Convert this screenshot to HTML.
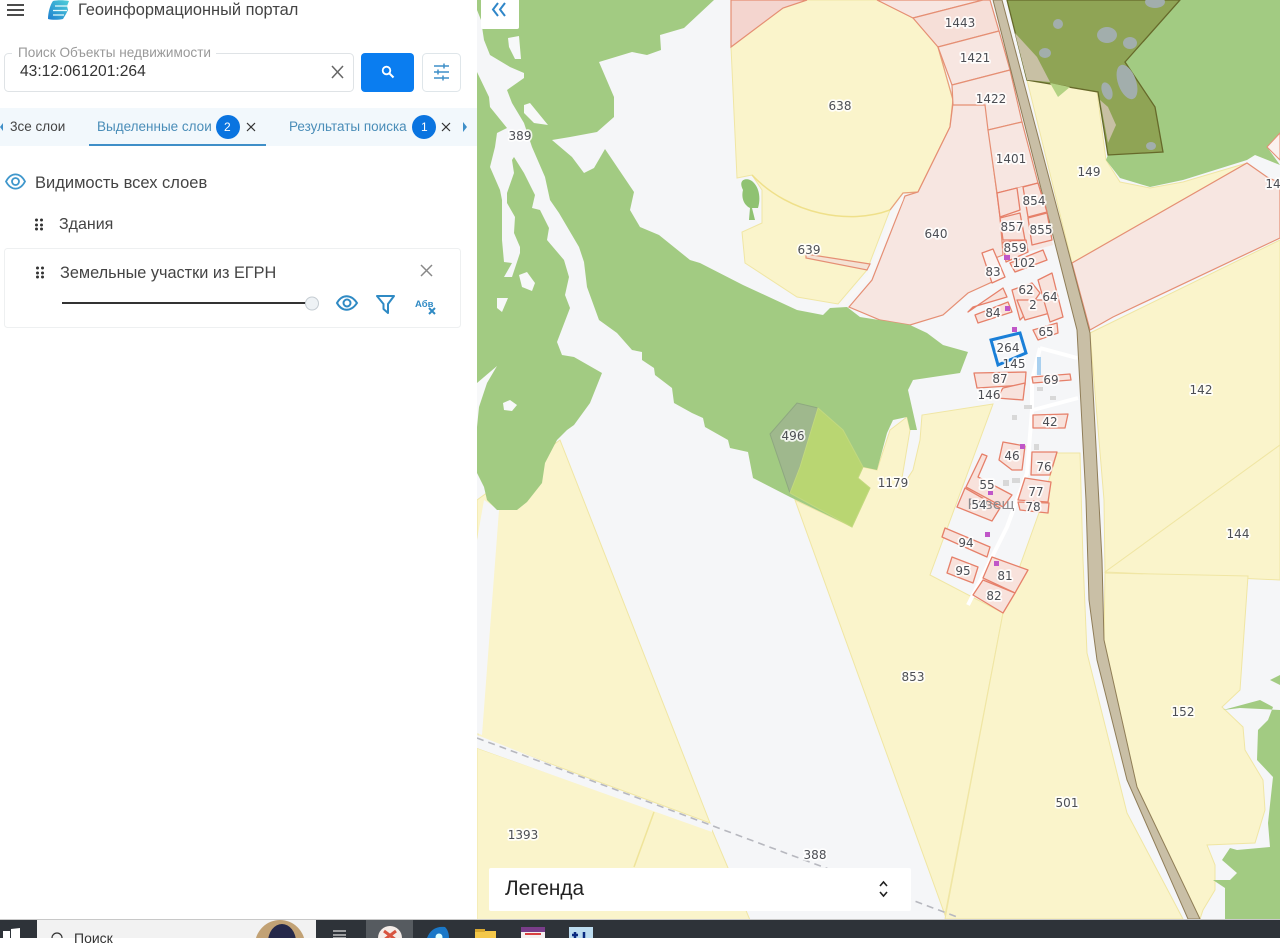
<!DOCTYPE html>
<html lang="ru"><head><meta charset="utf-8"><title>Геоинформационный портал</title>
<style>
html,body{margin:0;padding:0;width:1280px;height:938px;overflow:hidden;background:#fff;font-family:"Liberation Sans","DejaVu Sans",sans-serif}
svg{position:absolute;left:0;top:0}
.t{position:absolute;white-space:nowrap;line-height:1}
#map text{font-family:"DejaVu Sans",sans-serif;font-size:12px;fill:#4c4e54;text-anchor:middle;paint-order:stroke;stroke:#fff;stroke-width:3.5px;stroke-opacity:.85;stroke-linejoin:round}
</style></head><body>
<svg id="map" width="1280" height="938" viewBox="0 0 1280 938">
<defs><linearGradient id="lg" x1="0" y1="1" x2="1" y2="0"><stop offset="0" stop-color="#1f7fd0"/><stop offset="1" stop-color="#4fd0d8"/></linearGradient></defs>
<rect x="477" y="0" width="803" height="920" fill="#f5f6f8"/>
<!-- yellows -->
<g fill="#faf4cb" stroke="#f0e6a4" stroke-width="1">
<polygon points="560,440 710,823 478,737 477,500"/>
<polygon points="477,748 712,830 750,920 477,920"/>
<polygon points="795,500 852,527 870,488 858,478 863,467 877,470 890,430 907,417 910,430 900,490 913,470 920,440 922,415 993,404 930,575 1003,613 945,915"/>
<polygon points="1003,613 1040,510 1057,453 1080,453 1083,560 1087,653 1127,813 1183,919 945,919"/>
<polygon points="1027,80 1097,92 1106,160 1120,182 1150,188 1183,182 1247,163 1072,263"/>
<polygon points="1090,333 1280,240 1280,445 1105,572 1104,500"/>
<polygon points="1105,572 1280,445 1280,580"/>
<polygon points="1105,573 1248,576 1240,690 1222,707 1243,727 1245,750 1263,780 1265,810 1255,843 1207,845 1215,865 1215,890 1203,910 1200,919 1137,787 1104,640"/>
<polygon points="731,47 737,178 752,175 762,190 762,223 742,232 745,263 797,297 838,304 867,270 890,210 903,193 918,192 950,127 953,100 938,47 913,18 877,0 807,0 783,8"/>
</g>
<polygon points="484,500 499,510 482,735 477,733 477,540" fill="#f5f6f8"/>
<path d="M752,175 C790,215 850,225 890,210" fill="none" stroke="#efe08a" stroke-width="1.5"/>
<path d="M890,210L903,193 918,192 950,127 953,100 938,47" fill="none" stroke="#e8a27c" stroke-width="1.300"/>
<line x1="654" y1="812" x2="634" y2="867" stroke="#efe49a" stroke-width="1.5"/>
<!-- pinks -->
<g fill="#f7e6e1" stroke="#e58f74" stroke-width="1.2">
<polygon points="731,0 731,47 783,8 807,0" fill="#f4d5cf"/>
<polygon points="849,307 872,280 905,196 918,192 950,127 953,103 985,103 1000,217 1003,255 985,262 992,282 968,293 943,315 910,325 880,320"/>
<polygon points="877,0 913,18 983,0"/>
<polygon points="913,18 983,0 990,0 999,31 938,47" fill="#f6dfd8"/>
<polygon points="938,47 999,31 1010,70 952,85"/>
<polygon points="952,85 1010,70 1022,122 988,130 985,105 953,105"/>
<polygon points="988,130 1022,122 1038,183 997,193"/>
<polygon points="997,193 1038,183 1053,245 1005,258" stroke="none"/>
<polygon points="1072,263 1247,163 1267,177 1280,183 1280,238 1113,317 1090,330"/>
<polygon points="806,254 870,264 867,270 806,258" fill="#f4e2d4"/>
</g>
<path d="M902,198L869,276 842,305" fill="none" stroke="#f9f7f5" stroke-width="3.500"/>
<!-- greens -->
<g fill="#a2cb82">
<polygon points="477,0 714,0 684,28 660,35 661,50 647,55 632,52 599,62 614,97 614,117 597,132 570,137 552,140 572,157 584,173 594,168 605,149 634,192 630,210 640,227 659,235 690,260 700,263 743,285 797,310 823,315 830,308 847,307 860,317 910,325 927,333 943,345 968,352 960,373 913,380 908,390 917,430 910,430 907,417 893,420 887,433 877,470 863,467 858,478 870,488 852,527 790,497 753,478 748,452 730,448 728,440 705,427 703,418 692,413 674,403 672,388 655,375 654,368 642,360 642,352 632,350 617,333 599,320 587,287 584,262 579,247 569,230 559,213 550,200 545,177 532,147 524,123 512,103 507,90 524,78 524,73 510,67 490,55 484,40 481,20 477,10"/>
<polygon points="477,72 489,97 490,107 507,128 497,133 495,147 490,167 500,190 502,200 502,240 504,262 512,263 504,277 512,277 520,253 520,247 514,233 515,217 507,203 507,193 514,173 512,160 514,157 524,173 535,195 532,208 540,210 549,228 547,240 564,260 569,277 565,295 570,308 557,342 562,355 574,357 602,373 590,403 574,425 567,430 557,440 545,463 542,483 527,502 517,510 497,510 487,500 484,487 477,473"/>
<polygon points="1180,0 1280,0 1280,133 1267,147 1280,165 1255,155 1247,160 1183,180 1150,187 1120,178 1106,160 1108,155 1163,152 1155,107 1125,62"/>
<polygon points="1280,675 1270,680 1280,685"/>
<polygon points="1223,710 1260,700 1273,707 1268,720 1258,730 1257,760 1273,777 1268,823 1270,847 1237,850 1230,848 1222,860 1237,873 1230,880 1213,880 1225,888 1225,919 1280,919 1280,710 1240,708"/>
<path d="M743,190C738,180 745,178 750,180 757,183 762,195 758,208L752,208 755,220 749,220 750,208C744,205 741,198 743,190Z" fill="#8fc272"/>
</g>
<!-- holes -->
<g fill="#f7f8f9">
<polygon points="508,38 519,36 521,59 515,59 509,47"/>
<polygon points="524,105 530,103 548,125 534,123 524,113"/>
<polygon points="519,275 527,272 535,283 532,291 522,287"/>
<polygon points="497,298 508,298 502,312 497,308"/>
<polygon points="503,403 510,400 517,405 512,411 504,410"/>
<polygon points="477,383 497,366 487,383 479,407 477,427"/>
</g>
<!-- 496 -->
<polygon points="770,434 797,403 818,408 800,467 790,493" fill="#9fb88d" stroke="#8ea880"/>
<polygon points="818,408 843,430 863,467 858,478 870,488 852,527 790,493 800,467" fill="#b9d672" stroke="#c2d97f"/>
<!-- olive -->
<polygon points="1007,0 1180,0 1125,62 1155,107 1163,152 1108,155 1098,92 1027,80" fill="#8fa455" stroke="#66692a" stroke-width="1.3"/>
<polygon points="1015,33 1027,80 1050,82 1037,57" fill="#c8c0a4"/>
<polygon points="1100,100 1108,143 1116,125 1108,107" fill="#c8c0a4"/>
<polygon points="1050,83 1070,87 1058,97" fill="#b3d283"/>
<g fill="#a2aeac">
<ellipse cx="1107" cy="35" rx="10" ry="8"/><ellipse cx="1058" cy="24" rx="5" ry="5"/><ellipse cx="1045" cy="53" rx="6" ry="5"/><ellipse cx="1130" cy="43" rx="7" ry="6"/>
<ellipse cx="1127" cy="82" rx="9" ry="18" transform="rotate(-20 1127 82)"/><ellipse cx="1107" cy="91" rx="5" ry="9" transform="rotate(-20 1107 91)"/><ellipse cx="1151" cy="146" rx="5" ry="4"/><ellipse cx="1155" cy="2" rx="10" ry="6"/>
</g>
<!-- road -->
<polygon points="993,0 1077,330 1086,500 1089,600 1097,660 1127,780 1188,919 1200,919 1137,787 1104,640 1102,560 1090,333 1002,0" fill="#c9bfa6" stroke="#8f7d58" stroke-width="1"/>
<!-- village lanes -->
<g fill="none" stroke="#fff" stroke-width="4">
<path d="M1040,348L1032,380 1032,410 1027,473 1007,527 968,605"/><path d="M1040,348L1077,358"/><path d="M1033,410L1078,398"/>
</g>
<rect x="1037" y="357" width="4" height="18" fill="#a9d0ef"/>
<g fill="#d8d8d8"><rect x="1012" y="415" width="5" height="5"/><rect x="1024" y="405" width="8" height="4"/><rect x="1037" y="387" width="6" height="4"/><rect x="1050" y="396" width="6" height="4"/><rect x="1034" y="444" width="5" height="6"/><rect x="1003" y="480" width="6" height="6"/><rect x="1012" y="478" width="8" height="5"/></g>
<!-- parcels -->
<g fill="#f8e2dc" stroke="#e6806a" stroke-width="1.3" stroke-linejoin="round">
<polygon points="974,373 1026,372 1025,385 977,388"/>
<polygon points="1003,388 1025,383 1023,400 997,398"/>
<polygon points="1032,377 1070,374 1071,380 1033,383"/>
<polygon points="1033,415 1068,414 1065,428 1033,428"/>
<polygon points="1003,442 1025,446 1022,470 1012,470 999,460"/>
<polygon points="1032,452 1057,452 1050,475 1031,475"/>
<polygon points="1025,478 1051,482 1048,502 1018,500"/>
<polygon points="1018,502 1049,503 1048,513 1020,510"/>
<polygon points="982,454 987,456 978,477 1012,495 1003,507 966,487"/>
<polygon points="965,488 1000,508 992,521 957,507"/>
<polygon points="945,528 990,547 987,557 942,537"/>
<polygon points="952,557 978,567 973,583 947,573"/>
<polygon points="992,557 1028,570 1015,593 983,578"/>
<polygon points="983,580 1015,593 1003,613 973,595"/>
<polygon points="1033,330 1057,323 1058,333 1038,340"/>
<polygon points="975,315 1008,302 1012,312 978,323"/>
<polygon points="968,312 1003,288 1007,297 973,307"/>
<polygon points="1012,290 1032,283 1040,293 1023,317 1020,320"/>
<polygon points="1017,300 1047,300 1050,313 1025,320"/>
<polygon points="1038,280 1052,273 1063,317 1050,322"/>
<polygon points="982,253 993,249 1005,277 992,283" fill="#fbf2f0"/>
<polygon points="1010,263 1043,250 1047,260 1015,272"/>
<polygon points="997,193 1017,188 1020,210 1000,217"/>
<polygon points="1023,187 1038,183 1047,212 1028,217"/>
<polygon points="1028,218 1047,213 1052,240 1032,245"/>
<polygon points="1000,218 1020,213 1025,240 1003,240"/>
<polygon points="1003,242 1026,240 1028,252 1006,262"/>
</g>
<polygon points="991,340 1020,333 1026,353 998,365" fill="none" stroke="#1a7fd8" stroke-width="3"/>
<g fill="#c056c8"><rect x="1005" y="306" width="5" height="5"/><rect x="1012" y="327" width="5" height="5"/><rect x="1020" y="444" width="5" height="5"/><rect x="985" y="532" width="5" height="5"/><rect x="994" y="561" width="5" height="5"/><rect x="988" y="491" width="5" height="4"/><rect x="1004" y="255" width="6" height="5"/></g>
<polygon points="1267,147 1280,133 1280,160" fill="#fbf1ee" stroke="#e58f74"/>
<!-- dashed line -->
<polygon points="477,735 712,828 712,832 477,748" fill="#f5f6f8"/>
<line x1="477" y1="738" x2="960" y2="918" stroke="#b7b8bf" stroke-width="1.6" stroke-dasharray="7 5"/>
<!-- labels -->
<g>
<text x="991" y="509" style="font-size:14px;fill:#8a8a8e;stroke:none">Ровещ</text>
<text x="960" y="27">1443</text><text x="975" y="62">1421</text><text x="991" y="103">1422</text><text x="840" y="110">638</text><text x="1011" y="163">1401</text><text x="1089" y="176">149</text><text x="1273" y="188">14</text><text x="1034" y="205">854</text><text x="936" y="238">640</text><text x="1012" y="231">857</text><text x="1041" y="234">855</text><text x="1015" y="252">859</text><text x="809" y="254">639</text><text x="1024" y="267">102</text><text x="993" y="276">83</text><text x="1026" y="294">62</text><text x="1050" y="301">64</text><text x="1033" y="309">2</text><text x="993" y="317">84</text><text x="1046" y="336">65</text><text x="1008" y="352">264</text><text x="1014" y="368">145</text><text x="1000" y="383">87</text><text x="1051" y="384">69</text><text x="989" y="399">146</text><text x="1201" y="394">142</text><text x="1050" y="426">42</text><text x="793" y="440">496</text><text x="1012" y="460">46</text><text x="1044" y="471">76</text><text x="893" y="487">1179</text><text x="987" y="489">55</text><text x="1036" y="496">77</text><text x="979" y="509">54</text><text x="1033" y="511">78</text><text x="966" y="547">94</text><text x="1238" y="538">144</text><text x="963" y="575">95</text><text x="1005" y="580">81</text><text x="994" y="600">82</text><text x="913" y="681">853</text><text x="1183" y="716">152</text><text x="1067" y="807">501</text><text x="523" y="839">1393</text><text x="815" y="859">388</text><text x="520" y="140">389</text>
</g>
<!-- legend -->
<rect x="489" y="868" width="422" height="43" rx="2" fill="#fff"/>
<path d="M880 886l3.5-4 3.500 4M880 892l3.500 4 3.500-4" fill="none" stroke="#222" stroke-width="1.600"/>
<!-- collapse button -->
<rect x="481" y="-3" width="38" height="32" rx="2" fill="#fff"/>
<path d="M498 3l-5 6.500 5 6.500M505 3l-5 6.500 5 6.500" fill="none" stroke="#2f86c8" stroke-width="2"/>
<!-- panel -->
<rect x="0" y="0" width="477" height="920" fill="#fff"/>
<rect x="0" y="108" width="477" height="38" fill="#f2f8fc"/>
<rect x="89" y="144" width="177" height="2" fill="#3f8fc8"/>
<path d="M7 5h17M7 10h17M7 15h17" stroke="#333" stroke-width="1.800"/>
<path d="M53 1C57 0 64 0 69 1L67 6 68 10 66 14 63 19C58 20 52 20 48 19 48 13 50 5 53 1Z" fill="url(#lg)"/>
<path d="M55 6H67M53 10.500H67M53 15H64" stroke="#e8fafc" stroke-width="1.300"/>
<rect x="4.500" y="53.500" width="349" height="38" rx="4" fill="#fff" stroke="#dfe3e6"/>
<rect x="12" y="48" width="204" height="10" fill="#fff"/>
<path d="M332 66l11 12M343 66l-11 12" stroke="#666" stroke-width="1.500"/>
<rect x="361" y="53" width="53" height="39" rx="4" fill="#0a7df0"/>
<circle cx="386.500" cy="70.500" r="3.800" fill="none" stroke="#fff" stroke-width="1.800"/><path d="M389.500 73.500l4 4" stroke="#fff" stroke-width="2"/>
<rect x="422.500" y="53.500" width="38" height="38" rx="4" fill="#fff" stroke="#dfe6ea"/>
<path d="M434 66h15M434 72h15M434 78h15" stroke="#3f8fc8" stroke-width="1.500"/>
<path d="M444 63.500v5M438 69.500v5M443 75.500v5" stroke="#3f8fc8" stroke-width="1.500"/>
<path d="M3 123v8l-3-4z" fill="#3f8fc8"/>
<circle cx="228" cy="127" r="12" fill="#0a74e0"/><circle cx="424" cy="127" r="12" fill="#0a74e0"/>
<path d="M247 123l8 8M255 123l-8 8M442 123l8 8M450 123l-8 8" stroke="#333" stroke-width="1.200"/>
<path d="M463 122v10l4-5z" fill="#3f8fc8"/>
<path d="M6 181.500C11 172 20 172 25 181.500 20 191 11 191 6 181.500Z" fill="none" stroke="#3f97cc" stroke-width="1.800"/><circle cx="15.500" cy="181.500" r="3.500" fill="none" stroke="#3f97cc" stroke-width="1.800"/>
<g fill="#333"><circle cx="36.500" cy="220" r="1.500"/><circle cx="41.500" cy="220" r="1.500"/><circle cx="36.500" cy="225" r="1.500"/><circle cx="41.500" cy="225" r="1.500"/><circle cx="36.500" cy="229" r="1.500"/><circle cx="41.500" cy="229" r="1.500"/>
<circle cx="37.500" cy="268" r="1.500"/><circle cx="42.500" cy="268" r="1.500"/><circle cx="37.500" cy="273" r="1.500"/><circle cx="42.500" cy="273" r="1.500"/><circle cx="37.500" cy="277" r="1.500"/><circle cx="42.500" cy="277" r="1.500"/></g>
<rect x="4.500" y="248.500" width="456" height="79" rx="3" fill="none" stroke="#eef0f1"/>
<path d="M421 265l11 11M432 265l-11 11" stroke="#888" stroke-width="1.500"/>
<line x1="62" y1="303" x2="306" y2="303" stroke="#333" stroke-width="2"/>
<circle cx="312" cy="303.500" r="6.500" fill="#eef2f5" stroke="#c5ccd2"/>
<path d="M337 303C342 294 351 294 357 303 351 312 342 312 337 303Z" fill="none" stroke="#2f8ac4" stroke-width="2"/><circle cx="347" cy="303" r="3.500" fill="none" stroke="#2f8ac4" stroke-width="2"/>
<path d="M377 296H394L388 304V313L383.500 309V304Z" fill="none" stroke="#2f8ac4" stroke-width="2" stroke-linejoin="round"/>
<path d="M429 308l6 6M435 308l-6 6" stroke="#2f8ac4" stroke-width="2"/>
<!-- taskbar -->
<rect x="0" y="920" width="1280" height="18" fill="#2e3339"/>
<rect x="0" y="919" width="1280" height="1" fill="#c8c8c8"/>
<rect x="37" y="920" width="279" height="18" fill="#f2f2f2"/>
<path d="M3 931h7v7H3zM11 929l9-1v10h-9z" fill="#fff"/>
<circle cx="57" cy="938" r="5" fill="none" stroke="#333" stroke-width="1.200"/>
<circle cx="280" cy="945" r="25" fill="#c2a275"/><ellipse cx="282" cy="942" rx="14" ry="18" fill="#26294a"/>
<path d="M333 931h13M333 935h13M333 938h13" stroke="#ddd" stroke-width="1.200"/>
<rect x="366" y="920" width="47" height="18" fill="#565b60"/>
<circle cx="390" cy="938" r="12" fill="#f4ece8"/><path d="M384 931l12 9M396 931l-12 9" stroke="#d8543f" stroke-width="3"/>
<path d="M427 938C430 930 436 926 445 927 448 930 449 934 449 938Z" fill="#1a78c8"/><circle cx="439" cy="937" r="3.500" fill="#dff"/>
<rect x="475" y="931" width="21" height="7" fill="#f4c84a"/><rect x="475" y="929" width="10" height="3" fill="#d8a830"/>
<rect x="521" y="927" width="24" height="11" fill="#f4f0f0"/><rect x="521" y="927" width="24" height="5" fill="#7a3d8a"/><rect x="525" y="933" width="16" height="2" fill="#d84040"/>
<rect x="569" y="927" width="24" height="11" fill="#bcdcf0"/><path d="M572 935h6M575 932v6M584 932v6" stroke="#0a2a80" stroke-width="2.500"/>
</svg>
<div class="t" style="left:78px;top:2px;font-size:16.4px;color:#444">Геоинформационный портал</div>
<div class="t" style="left:18px;top:46px;font-size:13.6px;color:#999">Поиск Объекты недвижимости</div>
<div class="t" style="left:20px;top:64px;font-size:15.6px;color:#333">43:12:061201:264</div>
<div class="t" style="left:10px;top:120px;font-size:13.5px;color:#444">3се слои</div>
<div class="t" style="left:97px;top:120px;font-size:13.5px;color:#4a8db8">Выделенные слои</div>
<div class="t" style="left:289px;top:120px;font-size:13.5px;color:#4a8db8">Результаты поиска</div>
<div class="t" style="left:224px;top:121px;font-size:12px;color:#fff">2</div>
<div class="t" style="left:421px;top:121px;font-size:12px;color:#fff">1</div>
<div class="t" style="left:35px;top:175px;font-size:16.5px;color:#444">Видимость всех слоев</div>
<div class="t" style="left:59px;top:217px;font-size:16px;color:#444">Здания</div>
<div class="t" style="left:60px;top:265px;font-size:16.3px;color:#444">Земельные участки из ЕГРН</div>
<div class="t" style="left:415px;top:300px;font-size:9.5px;font-weight:bold;color:#2f8ac4">Абв</div>
<div class="t" style="left:505px;top:879px;font-size:20.8px;color:#222">Легенда</div>
<div class="t" style="left:74px;top:931px;font-size:14px;color:#333">Поиск</div>
</body></html>
